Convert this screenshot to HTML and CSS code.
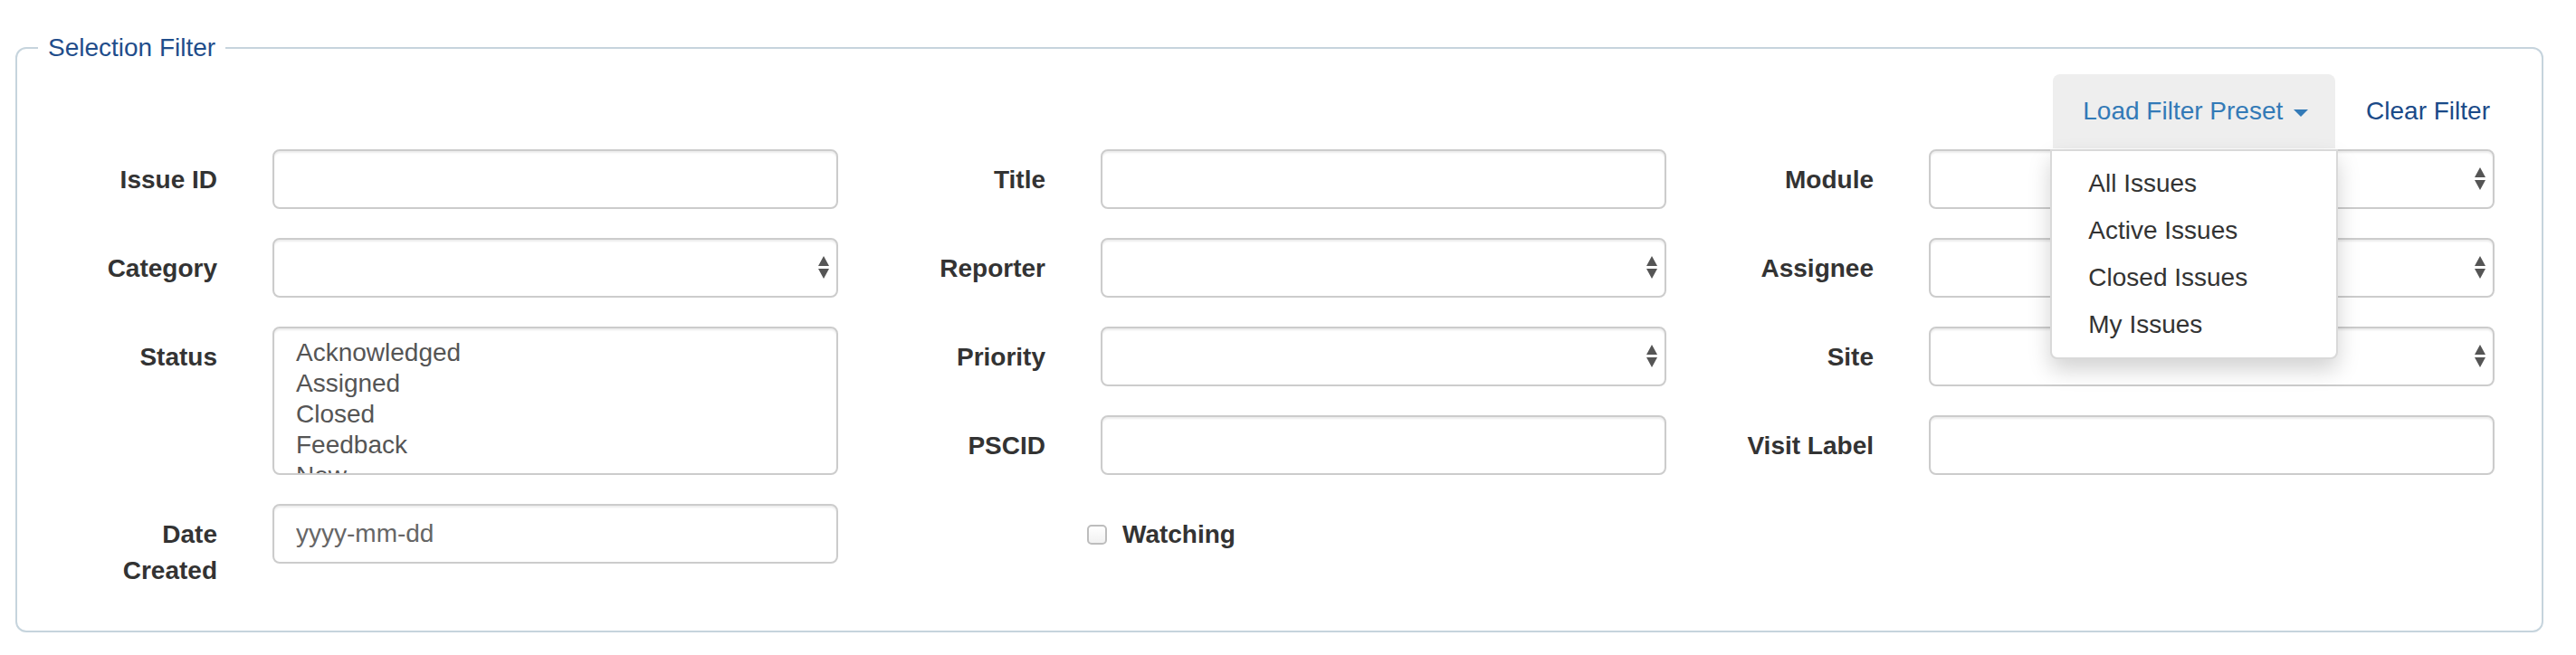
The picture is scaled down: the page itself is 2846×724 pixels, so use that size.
FILE: index.html
```html
<!DOCTYPE html>
<html lang="en">
<head>
    <meta charset="UTF-8">
    <meta name="viewport" content="width=device-width, initial-scale=1.0">
    <title>Issue Tracker</title>
    <link rel="stylesheet" href="styles.css">
</head>
<body>
    <fieldset class="filter">
        <legend>Selection Filter</legend>

        <div class="filter-actions">
            <div class="preset">
                <button class="preset-toggle" type="button">Load Filter Preset <span class="caret"></span></button>
                <ul class="preset-menu">
                    <li><a href="#">All Issues</a></li>
                    <li><a href="#">Active Issues</a></li>
                    <li><a href="#">Closed Issues</a></li>
                    <li><a href="#">My Issues</a></li>
                </ul>
            </div>
            <a class="clear-link" href="#">Clear Filter</a>
        </div>

        <form class="filter-grid">
            <!-- Row 1 -->
            <div class="field">
                <label for="issue-id">Issue ID</label>
                <input class="control" type="text" id="issue-id">
            </div>
            <div class="field">
                <label for="title">Title</label>
                <input class="control" type="text" id="title">
            </div>
            <div class="field">
                <label for="module">Module</label>
                <div class="select-wrap">
                    <select class="control" id="module"><option></option></select>
                    <svg class="arrows" width="12" height="25" viewBox="0 0 12 25"><path d="M6 0 L12 11 L0 11 Z M0 14 L12 14 L6 25 Z"/></svg>
                </div>
            </div>

            <!-- Row 2 -->
            <div class="field">
                <label for="category">Category</label>
                <div class="select-wrap">
                    <select class="control" id="category"><option></option></select>
                    <svg class="arrows" width="12" height="25" viewBox="0 0 12 25"><path d="M6 0 L12 11 L0 11 Z M0 14 L12 14 L6 25 Z"/></svg>
                </div>
            </div>
            <div class="field">
                <label for="reporter">Reporter</label>
                <div class="select-wrap">
                    <select class="control" id="reporter"><option></option></select>
                    <svg class="arrows" width="12" height="25" viewBox="0 0 12 25"><path d="M6 0 L12 11 L0 11 Z M0 14 L12 14 L6 25 Z"/></svg>
                </div>
            </div>
            <div class="field">
                <label for="assignee">Assignee</label>
                <div class="select-wrap">
                    <select class="control" id="assignee"><option></option></select>
                    <svg class="arrows" width="12" height="25" viewBox="0 0 12 25"><path d="M6 0 L12 11 L0 11 Z M0 14 L12 14 L6 25 Z"/></svg>
                </div>
            </div>

            <!-- Row 3 / 4 -->
            <div class="field field-tall">
                <label>Status</label>
                <div class="control listbox" role="listbox">
                    <div class="option">Acknowledged</div>
                    <div class="option">Assigned</div>
                    <div class="option">Closed</div>
                    <div class="option">Feedback</div>
                    <div class="option">New</div>
                    <div class="option">Resolved</div>
                </div>
            </div>
            <div class="field">
                <label for="priority">Priority</label>
                <div class="select-wrap">
                    <select class="control" id="priority"><option></option></select>
                    <svg class="arrows" width="12" height="25" viewBox="0 0 12 25"><path d="M6 0 L12 11 L0 11 Z M0 14 L12 14 L6 25 Z"/></svg>
                </div>
            </div>
            <div class="field">
                <label for="site">Site</label>
                <div class="select-wrap">
                    <select class="control" id="site"><option></option></select>
                    <svg class="arrows" width="12" height="25" viewBox="0 0 12 25"><path d="M6 0 L12 11 L0 11 Z M0 14 L12 14 L6 25 Z"/></svg>
                </div>
            </div>
            <div class="field">
                <label for="pscid">PSCID</label>
                <input class="control" type="text" id="pscid">
            </div>
            <div class="field">
                <label for="visit-label">Visit Label</label>
                <input class="control" type="text" id="visit-label">
            </div>

            <!-- Row 5 -->
            <div class="field">
                <label for="date-created">Date Created</label>
                <input class="control" type="text" id="date-created" placeholder="yyyy-mm-dd">
            </div>
            <div class="field">
                <label class="check">
                    <input type="checkbox" id="watching">
                    <span>Watching</span>
                </label>
            </div>
        </form>
    </fieldset>
</body>
</html>
```

FILE: styles.css
```css
/* Global Styles */
body {
    font-family: 'Liberation Sans', Arial, Helvetica, sans-serif;
    font-size: 28px;
    line-height: 40px;
    margin: 0;
    padding: 0;
    background-color: #ffffff;
    color: #333333;
}

/* Filter panel */
.filter {
    margin: 33px 36px 0 17px;
    padding: 9px 23px 46px 21px;
    border: 2px solid #c6d4dd; /* soft blue-grey frame */
    border-radius: 12px;
    min-width: 0;
}

.filter legend {
    margin-left: 2px;
    padding: 0 11px;
    color: #1f4d8b;
    font-size: 28px;
    line-height: 40px;
}

/* Preset / clear bar */
.filter-actions {
    display: flex;
    justify-content: flex-end;
    height: 82px;
}

.preset {
    position: relative;
    margin-right: 4px;
}

.preset-toggle {
    font-family: inherit;
    font-size: 28px;
    line-height: 40px;
    padding: 21px 30px 21px 33px;
    border: none;
    border-radius: 8px 8px 0 0;
    background: #eeeeee; /* open state */
    color: #337ab7;
    cursor: pointer;
}

.caret {
    display: inline-block;
    width: 0;
    height: 0;
    margin-left: 4px;
    vertical-align: middle;
    border-top: 8px solid;
    border-left: 8px solid transparent;
    border-right: 8px solid transparent;
}

.preset-menu {
    position: absolute;
    top: 100%;
    left: -3px;
    z-index: 10;
    min-width: 318px;
    box-sizing: border-box;
    margin: 1px 0 0;
    padding: 10px 0;
    list-style: none;
    background: #ffffff;
    border: 2px solid rgba(0, 0, 0, 0.15);
    border-radius: 0 0 8px 8px;
    box-shadow: 0 12px 24px rgba(0, 0, 0, 0.175);
}

.preset-menu a {
    display: block;
    padding: 6px 40px;
    color: #333333;
    text-decoration: none;
    white-space: nowrap;
}

.clear-link {
    display: block;
    padding: 21px 30px;
    margin-right: 4px;
    color: #1a4a88;
    text-decoration: none;
}

/* Form grid */
.filter-grid {
    display: grid;
    grid-template-columns: repeat(3, 915px);
    grid-auto-rows: minmax(66px, auto);
    row-gap: 32px;
    margin: 1px 0 0;
}

.field {
    display: grid;
    grid-template-columns: 200px 625px;
    column-gap: 61px;
    align-items: start;
}

.field-tall {
    grid-row: span 2;
}

.field > label {
    padding: 14px 0 0 30px;
    text-align: right;
    font-weight: bold;
    color: #333333;
}

.control {
    display: block;
    box-sizing: border-box;
    width: 625px;
    height: 66px;
    margin: 0;
    padding: 12px 24px;
    font-family: inherit;
    font-size: 28px;
    line-height: 40px;
    color: #555555;
    background: #ffffff;
    border: 2px solid #cccccc;
    border-radius: 8px;
    box-shadow: inset 0 2px 2px rgba(0, 0, 0, 0.075);
    appearance: none;
    -webkit-appearance: none;
    outline: none;
}

.control::placeholder {
    color: #666666;
}

.select-wrap {
    position: relative;
    width: 625px;
}

.arrows {
    position: absolute;
    right: 10px;
    top: 20px;
    fill: #555555;
    pointer-events: none;
}

.listbox {
    height: 164px;
    padding: 10px 24px;
    overflow: hidden;
    line-height: 34px;
}

/* Watching checkbox */
.field > label.check {
    grid-column: 2;
    display: flex;
    align-items: center;
    height: 40px;
    margin-left: -15px;
    padding: 14px 0 0;
}

.check input {
    appearance: none;
    -webkit-appearance: none;
    width: 22px;
    height: 22px;
    margin: 0 17px 0 0;
    border: 2px solid #bdbdbd;
    border-radius: 5px;
    background: linear-gradient(#ffffff, #f1f1f1);
}
```
